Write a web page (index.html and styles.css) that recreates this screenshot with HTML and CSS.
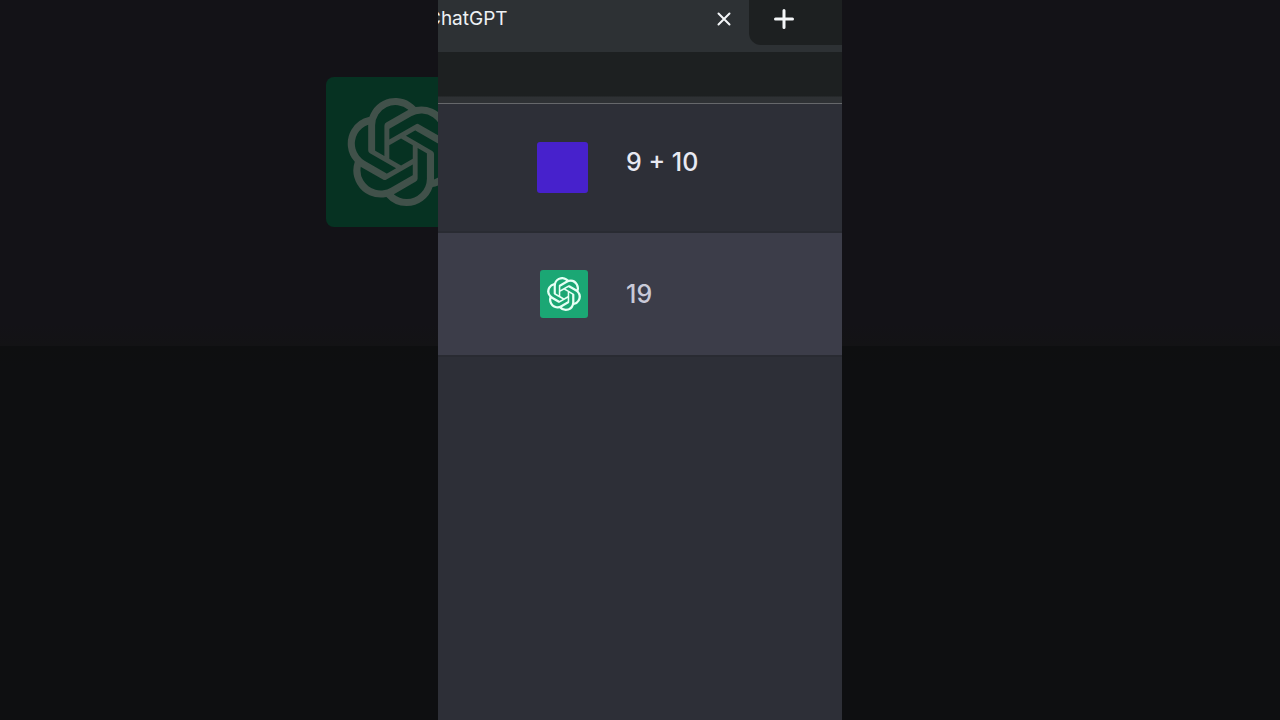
FILE: index.html
```
<!DOCTYPE html>
<html lang="en">
<head>
    <meta charset="UTF-8">
    <meta name="viewport" content="width=device-width, initial-scale=1.0">
    <title>ChatGPT</title>
    <link rel="stylesheet" href="styles.css">
</head>
<body>
    <!-- Shared logo shape -->
    <svg class="symbols" aria-hidden="true">
        <symbol id="logo" viewBox="0 0 24 24">
            <path d="M22.2819 9.8211a5.9847 5.9847 0 0 0-.5157-4.9108 6.0462 6.0462 0 0 0-6.5098-2.9A6.0651 6.0651 0 0 0 4.9807 4.1818a5.9847 5.9847 0 0 0-3.9977 2.9 6.0462 6.0462 0 0 0 .7427 7.0966 5.98 5.98 0 0 0 .511 4.9107 6.051 6.051 0 0 0 6.5146 2.9001A5.9847 5.9847 0 0 0 13.2599 24a6.0557 6.0557 0 0 0 5.7718-4.2058 5.9894 5.9894 0 0 0 3.9977-2.9001 6.0557 6.0557 0 0 0-.7475-7.0729zm-9.022 12.6081a4.4755 4.4755 0 0 1-2.8764-1.0408l.1419-.0804 4.7783-2.7582a.7948.7948 0 0 0 .3927-.6813v-6.7369l2.02 1.1686a.071.071 0 0 1 .038.052v5.5826a4.504 4.504 0 0 1-4.4945 4.4944zm-9.6607-4.1254a4.4708 4.4708 0 0 1-.5346-3.0137l.142.0852 4.783 2.7582a.7712.7712 0 0 0 .7806 0l5.8428-3.3685v2.3324a.0804.0804 0 0 1-.0332.0615L9.74 19.9502a4.4992 4.4992 0 0 1-6.1408-1.6464zM2.3408 7.8956a4.485 4.485 0 0 1 2.3655-1.9728V11.6a.7664.7664 0 0 0 .3879.6765l5.8144 3.3543-2.0201 1.1685a.0757.0757 0 0 1-.071 0l-4.8303-2.7865A4.504 4.504 0 0 1 2.3408 7.872zm16.5963 3.8558L13.1038 8.364 15.1192 7.2a.0757.0757 0 0 1 .071 0l4.8303 2.7913a4.4944 4.4944 0 0 1-.6765 8.1042v-5.6772a.79.79 0 0 0-.407-.667zm2.0107-3.0231l-.142-.0852-4.7735-2.7818a.7759.7759 0 0 0-.7854 0L9.409 9.2297V6.8974a.0662.0662 0 0 1 .0284-.0615l4.8303-2.7866a4.4992 4.4992 0 0 1 6.6802 4.66zM8.3065 12.863l-2.02-1.1638a.0804.0804 0 0 1-.038-.0567V6.0742a4.4992 4.4992 0 0 1 7.3757-3.4537l-.142.0805L8.704 5.459a.7948.7948 0 0 0-.3927.6813zm1.0976-2.3654l2.602-1.4998 2.6069 1.4998v2.9994l-2.5974 1.4997-2.6067-1.4997Z"/>
        </symbol>
    </svg>

    <div class="side">
        <div class="side-logo">
            <svg aria-hidden="true"><use href="#logo"/></svg>
        </div>
    </div>

    <main class="screen">
        <!-- Browser tabs -->
        <header class="tab-bar">
            <div class="tab">
                <span class="tab-title">ChatGPT</span>
                <button class="tab-button" aria-label="Close tab">
                    <svg class="icon-close" viewBox="0 0 14 14"><path d="M1.5 1.5l11 11M12.5 1.5l-11 11"/></svg>
                </button>
            </div>
            <div class="tab-rest">
                <button class="tab-button" aria-label="New tab">
                    <svg class="icon-plus" viewBox="0 0 20 20"><path d="M10 1.5v17M1.5 10h17"/></svg>
                </button>
            </div>
        </header>
        <div class="toolbar"></div>

        <!-- Conversation -->
        <div class="message user">
            <div class="avatar"></div>
            <p>9 + 10</p>
        </div>
        <div class="message assistant">
            <div class="avatar">
                <svg aria-hidden="true"><use href="#logo"/></svg>
            </div>
            <p>19</p>
        </div>
    </main>

    <div class="side"></div>
</body>
</html>
```
FILE: styles.css
```
* {
    box-sizing: border-box;
}

body {
    display: flex;
    margin: 0;
    min-height: 100vh;
    font-family: Inter, Roboto, sans-serif;
    background-color: #0e0f11;
}

button {
    display: flex;
    padding: 0;
    background: none;
    border: none;
    cursor: pointer;
}

.symbols {
    position: absolute;
    width: 0;
    height: 0;
}

/* Dimmed areas on both sides */
.side {
    flex: 1;
    display: flex;
    justify-content: flex-end;
    align-items: flex-start;
    overflow: hidden;
    padding-top: 77px;
    background: linear-gradient(#131217 45%, #131315 48%, #0e0f10 48%, #0e0f11 51%);
}

.side-logo {
    flex: none;
    display: flex;
    align-items: center;
    justify-content: center;
    width: 150px;
    height: 150px;
    margin-right: -38px;
    border-radius: 8px;
    background-color: #063222;
}

.side-logo svg {
    width: 108px;
    height: 108px;
    fill: #41514a;
}

.screen {
    flex: 0 1 404px;
    background-color: #2d2f37;
}

/* Tabs */
.tab-bar {
    display: flex;
    height: 52px;
    padding-bottom: 7px;
    background-color: #2d3134;
}

.tab {
    flex: 1;
    display: flex;
    align-items: center;
    justify-content: space-between;
    overflow: hidden;
    padding: 0 18px 7px 0;
}

.tab-title {
    margin-left: -11px;
    font-size: 19px;
    line-height: 24px;
    color: #eef1f4;
}

.tab-button {
    stroke: #f4f6f8;
    fill: none;
    stroke-linecap: round;
}

.icon-close {
    width: 14px;
    height: 14px;
    stroke-width: 2;
}

.icon-plus {
    width: 20px;
    height: 20px;
    stroke-width: 3;
}

.tab-rest {
    display: flex;
    align-items: center;
    width: 93px;
    padding: 0 0 7px 25px;
    border-bottom-left-radius: 12px;
    background-color: #1d2021;
}

.toolbar {
    height: 52px;
    border-bottom: 1px solid #66686b;
    background: linear-gradient(#1d2021 44px, #2e3134 45px);
}

/* Messages */
.message {
    display: flex;
    gap: 38px;
    border-bottom: 2px solid #292b32;
}

.message p {
    margin: 0;
    font-size: 25px;
    font-weight: 500;
    line-height: 40px;
}

.user {
    align-items: flex-start;
    padding: 38px 0 38px 99px;
    color: #e8e9f2;
}

.assistant {
    align-items: center;
    padding: 37px 0 37px 102px;
    background-color: #3c3d49;
    color: #c9cad8;
}

.avatar {
    flex: none;
    display: flex;
    align-items: center;
    justify-content: center;
    border-radius: 3px;
}

.user .avatar {
    width: 51px;
    height: 51px;
    background-color: #4721cc;
}

.assistant .avatar {
    width: 48px;
    height: 48px;
    background-color: #1ba774;
}

.avatar svg {
    width: 34px;
    height: 34px;
    fill: #e6fff4;
}
```
